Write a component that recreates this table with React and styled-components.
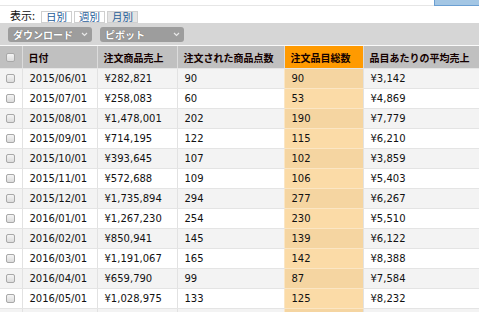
import React from "react";
import styled, { createGlobalStyle, css } from "styled-components";

const Global = createGlobalStyle`
  html, body { margin: 0; padding: 0; background: #fff; }
  body { font-family: "DejaVu Sans", "Noto Sans CJK JP", sans-serif; font-size: 10px; color: #111; overflow: hidden; }
`;

const JP = `"Noto Sans CJK JP", "DejaVu Sans", sans-serif`;

const Page = styled.div`
  width: 479px;
  height: 312px;
  overflow: hidden;
`;

const TopStrip = styled.div`
  display: flex;
  height: 6px;
`;

const TopLine = styled.div`
  flex: 1;
  border-bottom: 1px solid #e6e6e6;
`;

const TopTab = styled.div`
  width: 45px;
  background: #a3c6e4;
  border-left: 1px solid #6b9fd2;
  border-bottom: 1px solid #6b9fd2;
  box-sizing: border-box;
`;

const ViewRow = styled.div`
  display: flex;
  align-items: center;
  height: 17px;
  padding-left: 10px;
  gap: 2px;
`;

const ViewLabel = styled.span`
  font-family: ${JP};
  font-size: 11px;
  color: #111;
  margin-right: 4px;
  line-height: 12px;
`;

const ViewButton = styled.span`
  box-sizing: border-box;
  display: inline-flex;
  align-items: center;
  justify-content: center;
  width: 31px;
  height: 12px;
  margin-top: 5px;
  border: 1px solid #cfcfcf;
  background: ${(p) => (p.$active ? "#e4e4e4" : "#fff")};
  color: #1f5d99;
  font-family: ${JP};
  font-size: 10.5px;
  line-height: 10px;
`;

const Toolbar = styled.div`
  display: flex;
  align-items: center;
  gap: 8px;
  height: 22px;
  padding-left: 8px;
  background: #d6d6d6;
  border-bottom: 1px solid #fafafa;
`;

const Dropdown = styled.div`
  box-sizing: border-box;
  display: flex;
  align-items: center;
  justify-content: space-between;
  width: 84px;
  height: 15px;
  padding: 0 4px 0 5px;
  background: #9d9d9d;
  border-radius: 3px;
  color: #fff;
  font-family: ${JP};
  font-weight: 700;
  font-size: 10px;
  text-shadow: 0 0 1px #555;
`;

const Chevron = styled.svg`
  width: 7px;
  height: 5px;
`;

const Table = styled.table`
  border-collapse: collapse;
  table-layout: fixed;
  width: 500px;
`;

const HeadCell = styled.th`
  height: 22px;
  padding: 0 0 0 ${(p) => (p.$check ? 0 : 6)}px;
  text-align: ${(p) => (p.$check ? "center" : "left")};
  font-family: ${JP};
  font-weight: 700;
  font-size: 10px;
  color: #140000;
  white-space: nowrap;
  overflow: hidden;
  background: ${(p) => (p.$hot ? "#ff9a00" : "#c0c0c0")};
  border-left: 1px solid #dcdcdc;
  border-bottom: 1px solid #e6e6e6;
  &:first-child { border-left: none; }
`;

const Row = styled.tr`
  background: ${(p) => (p.$odd ? "#f3f3f3" : "#fff")};
`;

const Cell = styled.td`
  height: 19px;
  padding: 0 0 0 ${(p) => (p.$check ? 0 : 7)}px;
  text-align: ${(p) => (p.$check ? "center" : "left")};
  font-size: 10px;
  color: #111;
  white-space: nowrap;
  overflow: hidden;
  border-left: 1px solid #e2e2e2;
  border-bottom: 1px solid #e4e4e4;
  &:first-child { border-left: none; }
  ${(p) =>
    p.$hot &&
    css`
      background: ${p.$odd ? "#f5d5a1" : "#fbdba7"};
      border-left-color: #fbe6c4;
      border-bottom-color: #fbe6c4;
    `}
`;

const Check = styled.span`
  display: inline-block;
  box-sizing: border-box;
  width: 9px;
  height: 9px;
  vertical-align: middle;
  border: 1px solid #a8a8a8;
  border-radius: 2px;
  background: linear-gradient(#f4f4f4, #dcdcdc);
  margin-top: -2px;
`;

const rows = [
  ["2015/06/01", "¥282,821", "90", "90", "¥3,142"],
  ["2015/07/01", "¥258,083", "60", "53", "¥4,869"],
  ["2015/08/01", "¥1,478,001", "202", "190", "¥7,779"],
  ["2015/09/01", "¥714,195", "122", "115", "¥6,210"],
  ["2015/10/01", "¥393,645", "107", "102", "¥3,859"],
  ["2015/11/01", "¥572,688", "109", "106", "¥5,403"],
  ["2015/12/01", "¥1,735,894", "294", "277", "¥6,267"],
  ["2016/01/01", "¥1,267,230", "254", "230", "¥5,510"],
  ["2016/02/01", "¥850,941", "145", "139", "¥6,122"],
  ["2016/03/01", "¥1,191,067", "165", "142", "¥8,388"],
  ["2016/04/01", "¥659,790", "99", "87", "¥7,584"],
  ["2016/05/01", "¥1,028,975", "133", "125", "¥8,232"],
  ["", "", "", "", ""],
];

const headers = ["日付", "注文商品売上", "注文された商品点数", "注文品目総数", "品目あたりの平均売上"];
const HOT = 3;

function ChevronIcon() {
  return (
    <Chevron viewBox="0 0 7 5">
      <path d="M1 1 L3.5 3.5 L6 1" fill="none" stroke="#e8e8e8" strokeWidth="1.2" />
    </Chevron>
  );
}

export default function App() {
  return (
    <Page>
      <Global />
      <TopStrip>
        <TopLine />
        <TopTab />
      </TopStrip>
      <ViewRow>
        <ViewLabel>表示:</ViewLabel>
        <ViewButton>日別</ViewButton>
        <ViewButton>週別</ViewButton>
        <ViewButton $active>月別</ViewButton>
      </ViewRow>
      <Toolbar>
        <Dropdown>
          <span>ダウンロード</span>
          <ChevronIcon />
        </Dropdown>
        <Dropdown>
          <span>ピボット</span>
          <ChevronIcon />
        </Dropdown>
      </Toolbar>
      <Table>
        <colgroup>
          <col style={{ width: 22 }} />
          <col style={{ width: 75 }} />
          <col style={{ width: 80 }} />
          <col style={{ width: 107 }} />
          <col style={{ width: 79 }} />
          <col />
        </colgroup>
        <thead>
          <tr>
            <HeadCell $check>
              <Check />
            </HeadCell>
            {headers.map((h, i) => (
              <HeadCell key={h} $hot={i === HOT}>
                {h}
              </HeadCell>
            ))}
          </tr>
        </thead>
        <tbody>
          {rows.map((r, ri) => {
            const odd = ri % 2 === 0;
            return (
              <Row key={ri} $odd={odd}>
                <Cell $check>
                  <Check />
                </Cell>
                {r.map((v, ci) => (
                  <Cell key={ci} $hot={ci === HOT} $odd={odd}>
                    {v}
                  </Cell>
                ))}
              </Row>
            );
          })}
        </tbody>
      </Table>
    </Page>
  );
}
